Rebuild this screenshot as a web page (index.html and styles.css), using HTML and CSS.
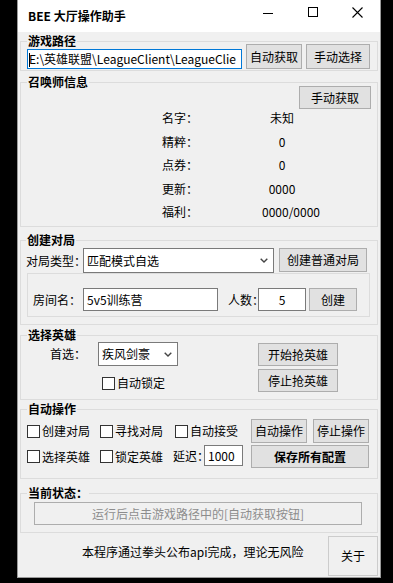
FILE: index.html
```html
<!DOCTYPE html>
<html lang="zh-CN">
  <head>
    <meta charset="UTF-8" />
    <title>BEE 大厅操作助手</title>
    <link rel="stylesheet" href="styles.css">
  </head>
  <body>
    <div class="window">
      <div class="titlebar">
        <span class="title">BEE 大厅操作助手</span>
        <div class="caption">
          <span class="cap-btn">
            <svg width="10" height="10" viewBox="0 0 10 10"><path d="M0 6.5h10" stroke="#000" /></svg>
          </span>
          <span class="cap-btn">
            <svg width="10" height="10" viewBox="0 0 10 10"><rect x="0.5" y="0.5" width="9" height="9" fill="none" stroke="#000" /></svg>
          </span>
          <span class="cap-btn">
            <svg width="11" height="11" viewBox="0 0 11 11"><path d="M0.5 0.5l10 10M10.5 0.5l-10 10" stroke="#000" stroke-width="1.1" /></svg>
          </span>
        </div>
      </div>

      <div class="group group-path">
        <div class="group-title">游戏路径</div>
        <div class="row path-row">
          <div class="textbox path-box"><span class="caret"></span>E:\英雄联盟\LeagueClient\LeagueClie</div>
          <button class="btn btn-path">自动获取</button>
          <button class="btn btn-pick">手动选择</button>
        </div>
      </div>

      <div class="group group-summoner">
        <div class="group-title">召唤师信息</div>
        <div class="fetch-row">
          <button class="btn btn-fetch">手动获取</button>
        </div>
        <div class="info">
          <span class="info-label">名字<span class="punct">：</span></span><span class="info-value">未知</span>
          <span class="info-label">精粹<span class="punct">：</span></span><span class="info-value">0</span>
          <span class="info-label">点券<span class="punct">：</span></span><span class="info-value">0</span>
          <span class="info-label">更新<span class="punct">：</span></span><span class="info-value">0000</span>
          <span class="info-label">福利<span class="punct">：</span></span><span class="info-value shift">0000/0000</span>
        </div>
      </div>

      <div class="group group-create">
        <div class="group-title">创建对局</div>
        <div class="row mode-row">
          <span class="label mode-label">对局类型<span class="punct">：</span></span>
          <div class="combo mode-combo">
            <span>匹配模式自选</span>
            <svg width="8" height="5" viewBox="0 0 8 5"><path d="M0.7 0.7l3.3 3.3 3.3-3.3" fill="none" stroke="#444" stroke-width="1.4" /></svg>
          </div>
          <button class="btn btn-normal">创建普通对局</button>
        </div>
        <div class="panel">
          <div class="row room-row">
            <span class="label room-label">房间名<span class="punct">：</span></span>
            <div class="textbox room-box">5v5训练营</div>
            <span class="label count-label">人数<span class="punct">：</span></span>
            <div class="textbox count-box">5</div>
            <button class="btn btn-create">创建</button>
          </div>
        </div>
      </div>

      <div class="group group-hero">
        <div class="group-title">选择英雄</div>
        <div class="hero-body">
          <div class="hero-left">
            <div class="row pick-row">
              <span class="label pick-label">首选<span class="punct">：</span></span>
              <div class="combo hero-combo">
                <span>疾风剑豪</span>
                <svg width="8" height="5" viewBox="0 0 8 5"><path d="M0.7 0.7l3.3 3.3 3.3-3.3" fill="none" stroke="#444" stroke-width="1.4" /></svg>
              </div>
            </div>
            <label class="check lock-check"><span class="box"></span>自动锁定</label>
          </div>
          <div class="hero-right">
            <button class="btn btn-hero">开始抢英雄</button>
            <button class="btn btn-hero">停止抢英雄</button>
          </div>
        </div>
      </div>

      <div class="group group-auto">
        <div class="group-title">自动操作</div>
        <div class="auto-grid">
          <label class="check"><span class="box"></span>创建对局</label>
          <label class="check"><span class="box"></span>寻找对局</label>
          <label class="check"><span class="box"></span>自动接受</label>
          <button class="btn btn-auto">自动操作</button>
          <button class="btn btn-auto">停止操作</button>
          <label class="check"><span class="box"></span>选择英雄</label>
          <label class="check"><span class="box"></span>锁定英雄</label>
          <div class="delay">
            <span class="label delay-label">延迟<span class="punct">：</span></span>
            <div class="textbox delay-box">1000</div>
          </div>
          <button class="btn btn-save">保存所有配置</button>
        </div>
      </div>

      <div class="group group-status">
        <div class="group-title">当前状态<span class="punct">：</span></div>
        <div class="status-box">运行后点击游戏路径中的[自动获取按钮]</div>
      </div>

      <div class="footer">
        <span class="note">本程序通过拳头公布api完成<span class="punct">，</span>理论无风险</span>
        <button class="btn btn-about">关于</button>
      </div>
    </div>
  </body>
</html>
```

FILE: styles.css
```css
* {
  box-sizing: border-box;
}

body {
  margin: 0;
  background: #000;
  font-family: "Noto Sans CJK SC", "Microsoft YaHei", sans-serif;
  font-size: 12px;
  line-height: 16px;
  color: #000;
}

/* centred full-width punctuation, as on a Windows UI */
.punct {
  font-family: "Noto Sans CJK TC", "Noto Sans CJK SC", sans-serif;
}

.window {
  width: 364px;
  height: 578px;
  margin-left: 17px;
  background: #f0f0f0;
  border: 1px solid #9a9a9a;
  border-top: none;
  display: flex;
  flex-direction: column;
}

/* title bar */
.titlebar {
  height: 32px;
  flex: 0 0 32px;
  background: #fff;
  display: flex;
  align-items: flex-start;
}

.title {
  flex: 1;
  padding-left: 10px;
  font-weight: bold;
  line-height: 32px;
}

.caption {
  display: flex;
}

.cap-btn {
  width: 45px;
  height: 24px;
  display: flex;
  align-items: center;
  justify-content: center;
}

/* group boxes */
.group {
  border: 1px solid #dcdcdc;
  margin: 0 2px;
  padding: 0 7px 0 6px;
}

.group-title {
  width: max-content;
  margin: -8px 0 -6px 0;
  padding: 0 1px;
  background: #f0f0f0;
  font-weight: bold;
  line-height: 14px;
}

.row {
  display: flex;
  align-items: flex-start;
}

.label {
  white-space: nowrap;
}

.btn {
  font: inherit;
  color: #000;
  padding: 0;
  background: #e1e1e1;
  border: 1px solid #adadad;
  white-space: nowrap;
}

.textbox {
  background: #fff;
  border: 1px solid #7a7a7a;
  white-space: nowrap;
  overflow: hidden;
}

.combo {
  display: flex;
  align-items: center;
  justify-content: space-between;
  background: #fff;
  border: 1px solid #7a7a7a;
  padding: 0 5px 0 3px;
  white-space: nowrap;
}

.check {
  display: flex;
  align-items: center;
  gap: 2px;
  white-space: nowrap;
}

.box {
  width: 13px;
  height: 13px;
  background: #fff;
  border: 1px solid #333;
}

/* 游戏路径 */
.group-path {
  margin-top: 9px;
  padding-bottom: 1px;
}

.path-row {
  margin-top: 2px;
  align-items: flex-end;
  gap: 4px;
}

.path-box {
  width: 215px;
  height: 20px;
  line-height: 18px;
  padding-left: 1px;
  border-color: #0078d7;
}

.caret {
  display: inline-block;
  width: 1px;
  height: 14px;
  margin-right: -1px;
  vertical-align: -3px;
  background: #000;
}

.btn-path {
  width: 56px;
  height: 25px;
}

.btn-pick {
  width: 64px;
  height: 25px;
}

/* 召唤师信息 */
.group-summoner {
  margin-top: 11px;
  padding-bottom: 6px;
}

.fetch-row {
  display: flex;
  justify-content: flex-end;
  margin-top: 3px;
}

.btn-fetch {
  width: 72px;
  height: 23px;
  margin-right: -1px;
}

.info {
  display: grid;
  grid-template-columns: 60px 120px;
  row-gap: 7.5px;
  margin-top: 1px;
  padding-left: 135px;
}

.info-value {
  text-align: center;
}

.info-value.shift {
  padding-left: 18px;
}

/* 创建对局 */
.group-create {
  margin-top: 13px;
  padding-left: 5px;
  padding-bottom: 7px;
}

.mode-row {
  margin-top: 7px;
}

.mode-label {
  width: 60px;
  margin-right: -3px;
  line-height: 25px;
}

.mode-combo {
  width: 191px;
  height: 25px;
}

.btn-normal {
  width: 88px;
  height: 24px;
  margin-left: 5px;
}

.panel {
  margin-left: 1px;
  border: 1px solid #dcdcdc;
  padding: 14px 5px 5px;
}

.room-label {
  width: 48px;
  margin-right: 2px;
  line-height: 23px;
}

.room-box {
  width: 135px;
  height: 23px;
  line-height: 21px;
  padding-left: 3px;
}

.count-label {
  width: 36px;
  margin: 0 -6px 0 10px;
  line-height: 23px;
}

.count-box {
  width: 48px;
  height: 23px;
  line-height: 21px;
  text-align: center;
}

.btn-create {
  width: 48px;
  height: 23px;
  margin-left: 3px;
}

/* 选择英雄 */
.group-hero {
  margin-top: 10px;
  padding-bottom: 7px;
}

.hero-body {
  display: flex;
  margin-top: 6px;
}

.hero-left {
  flex: 0 0 231px;
}

.pick-label {
  width: 36px;
  margin: 0 12px 0 23px;
  line-height: 24px;
}

.hero-combo {
  width: 80px;
  height: 24px;
}

.lock-check {
  margin: 9px 0 0 75px;
}

.hero-right {
  display: flex;
  flex-direction: column;
  gap: 3px;
  margin-top: 1px;
}

.btn-hero {
  width: 80px;
  height: 23px;
}

/* 自动操作 */
.group-auto {
  margin-top: 9px;
  padding-bottom: 10px;
}

.auto-grid {
  display: grid;
  grid-template-columns: 73px 75px 76px 62px 56px;
  grid-template-rows: 24px 23px;
  row-gap: 2px;
  margin-top: 9px;
  align-items: center;
}

.btn-auto {
  width: 56px;
  height: 24px;
}

.delay {
  display: flex;
  align-items: flex-start;
  align-self: start;
  margin-left: -2px;
}

.delay-label {
  width: 36px;
  margin-right: -5px;
  line-height: 21px;
}

.delay-box {
  width: 39px;
  height: 21px;
  line-height: 19px;
  padding-left: 3px;
}

.btn-save {
  grid-column: 4 / 6;
  height: 23px;
  font-weight: bold;
}

/* 当前状态 */
.group-status {
  margin-top: 14px;
  padding-bottom: 7px;
}

.status-box {
  width: 328px;
  height: 23px;
  margin: 8px 0 0 7px;
  border: 1px solid #adadad;
  color: #8d8d8d;
  line-height: 21px;
  text-align: center;
  white-space: nowrap;
}

/* footer */
.footer {
  display: flex;
  align-items: flex-start;
  padding: 3px 2px 1px 64px;
}

.note {
  margin-top: 8px;
  white-space: nowrap;
}

.btn-about {
  width: 50px;
  height: 40px;
  margin-left: auto;
  background: #f0f0f0;
  border-color: #cccccc;
}
```
